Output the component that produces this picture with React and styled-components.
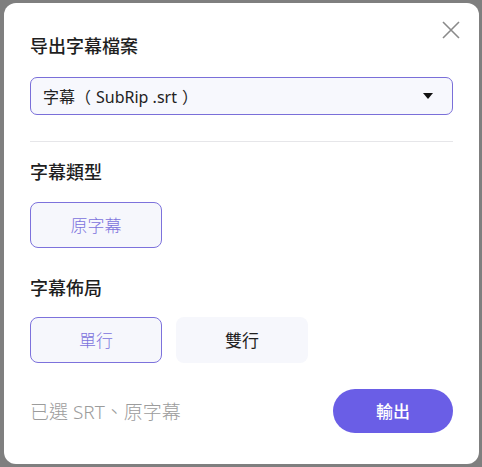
import React, { useState } from "react";
import styled, { createGlobalStyle } from "styled-components";

const Global = createGlobalStyle`
  html, body { margin: 0; padding: 0; }
  body {
    background: #7f7f7f;
    font-family: "Noto Sans", "Noto Sans CJK TC", "Noto Sans CJK SC", sans-serif;
  }
`;

const Backdrop = styled.div`
  width: 482px;
  height: 467px;
  box-sizing: border-box;
  padding: 3px 3px 0 4px;
  background: #7f7f7f;
`;

const Modal = styled.div`
  position: relative;
  width: 475px;
  box-sizing: border-box;
  padding: 31px 26px 31px 26px;
  background: #fff;
  border-radius: 12px;
  display: flex;
  flex-direction: column;
`;

const Title = styled.h2`
  margin: 0;
  font-size: 18px;
  line-height: 24px;
  font-weight: 500;
  color: #1f1f1f;
`;

const Close = styled.button`
  position: absolute;
  top: 18px;
  right: 19px;
  width: 18px;
  height: 18px;
  padding: 0;
  border: none;
  background: none;
  cursor: pointer;
  display: flex;
`;

const Select = styled.div`
  margin-top: 18.5px;
  height: 38px;
  box-sizing: border-box;
  display: flex;
  align-items: center;
  justify-content: space-between;
  padding: 0 19px 0 12px;
  border: 1.5px solid #7a6fd9;
  border-radius: 7px;
  background: #f7f8fd;
  font-size: 16px;
  color: #222;
`;

const SelectLabel = styled.span`
  white-space: nowrap;
`;

/* fullwidth brackets sit centred in their cell in the original */
const Paren = styled.span`
  margin: ${(p) => (p.$open ? "0 5px 0 0" : "0 0 0 5px")};
`;

const Caret = styled.span`
  width: 0;
  height: 0;
  border-left: 5.5px solid transparent;
  border-right: 5.5px solid transparent;
  border-top: 6px solid #111;
`;

const Divider = styled.hr`
  margin: 26px 0 0;
  border: none;
  height: 1px;
  background: #e6e6e9;
`;

const Heading = styled.h3`
  margin: ${(p) => p.$top}px 0 0;
  font-size: 18px;
  line-height: 22px;
  font-weight: 500;
  color: #1f1f1f;
`;

const Options = styled.div`
  margin-top: ${(p) => p.$top}px;
  display: flex;
  gap: 14px;
`;

const Option = styled.button`
  width: 132px;
  height: 46px;
  box-sizing: border-box;
  border-radius: 8px;
  border: 1px solid ${(p) => (p.$active ? "#7d72dc" : "transparent")};
  background: #f6f7fc;
  color: ${(p) => (p.$active ? "#7c72dc" : "#1f1f1f")};
  font-family: inherit;
  font-size: 17px;
  font-weight: ${(p) => (p.$active ? 300 : 400)};
  cursor: pointer;
`;

const Footer = styled.div`
  margin-top: 26px;
  display: flex;
  align-items: center;
  justify-content: space-between;
`;

const Summary = styled.span`
  font-size: 19px;
  font-weight: 300;
  color: #9c9c9c;
`;

const Submit = styled.button`
  width: 120px;
  height: 44px;
  border: none;
  border-radius: 22px;
  background: #6a5ee6;
  color: #fff;
  font-family: inherit;
  font-size: 17px;
  font-weight: 500;
  cursor: pointer;
`;

export default function App() {
  const [layout, setLayout] = useState("single");
  return (
    <>
      <Global />
      <Backdrop>
        <Modal lang="zh-TW">
          <Close aria-label="關閉">
            <svg width="18" height="18" viewBox="0 0 18 18">
              <path d="M1 1 17 17M17 1 1 17" stroke="#8a8a8a" strokeWidth="1.6" fill="none" />
            </svg>
          </Close>
          <Title>导出字幕檔案</Title>
          <Select>
            <SelectLabel>
              字幕<Paren $open>（</Paren>SubRip .srt<Paren>）</Paren>
            </SelectLabel>
            <Caret />
          </Select>
          <Divider />
          <Heading $top={19.5}>字幕類型</Heading>
          <Options $top={18.5}>
            <Option $active>原字幕</Option>
          </Options>
          <Heading $top={29}>字幕佈局</Heading>
          <Options $top={18}>
            <Option $active={layout === "single"} onClick={() => setLayout("single")}>單行</Option>
            <Option $active={layout === "double"} onClick={() => setLayout("double")}>雙行</Option>
          </Options>
          <Footer>
            <Summary>已選 SRT、原字幕</Summary>
            <Submit>輸出</Submit>
          </Footer>
        </Modal>
      </Backdrop>
    </>
  );
}
